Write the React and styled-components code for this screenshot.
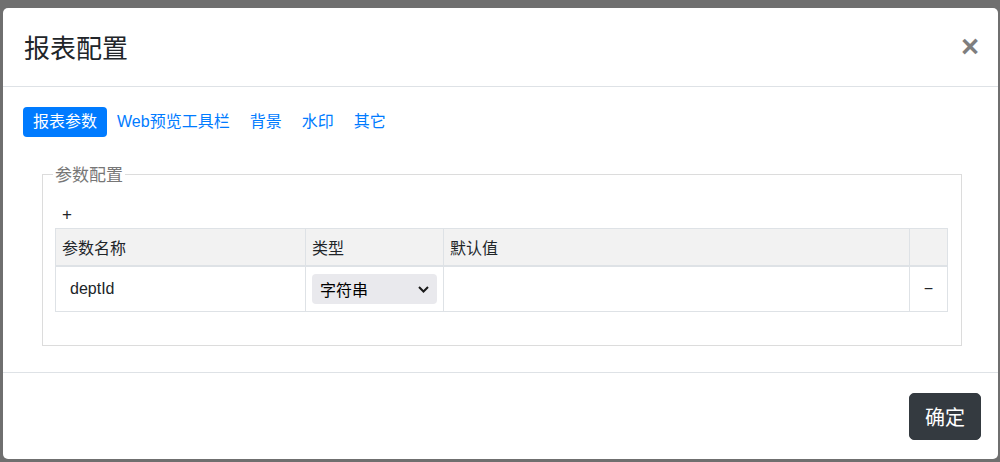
import React from "react";
import styled, { createGlobalStyle } from "styled-components";

const GlobalStyle = createGlobalStyle`
  html, body { margin: 0; padding: 0; }
  body {
    background: #6f6f6f;
    font-family: "Liberation Sans", "Noto Sans CJK SC", sans-serif;
    color: #212529;
  }
  * { box-sizing: border-box; }
`;

const Backdrop = styled.div`
  height: 462px;
  padding: 8px 2px 3px 3px;
  overflow: hidden;
`;

const Dialog = styled.div`
  width: 995px;
  background: #fff;
  border-radius: 5px;
  display: flex;
  flex-direction: column;
`;

const Header = styled.div`
  height: 79px;
  border-bottom: 1px solid #dee2e6;
  display: flex;
  align-items: center;
  justify-content: space-between;
  padding: 0 19px 0 21px;
`;

const Title = styled.h5`
  margin: 0;
  font-family: "Noto Sans CJK SC", sans-serif;
  font-size: 26px;
  font-weight: 400;
  line-height: 1.2;
  color: #212529;
`;

const CloseButton = styled.button`
  background: none;
  border: 0;
  padding: 0;
  margin: 0 0 2px 0;
  font-family: "Liberation Sans", sans-serif;
  font-size: 31px;
  font-weight: 700;
  line-height: 1;
  color: #000;
  opacity: 0.5;
  cursor: pointer;
`;

const Body = styled.div`
  padding: 20px 20px 26px 20px;
`;

const Nav = styled.div`
  display: flex;
`;

const NavLink = styled.a`
  display: block;
  padding: 3px 10px;
  font-family: "Liberation Sans", "Noto Sans CJK SC", sans-serif;
  font-size: 16px;
  line-height: 24px;
  border-radius: 4px;
  color: ${(p) => (p.$active ? "#fff" : "#007bff")};
  background: ${(p) => (p.$active ? "#007bff" : "transparent")};
  text-decoration: none;
  cursor: pointer;
`;

const Fieldset = styled.fieldset`
  margin: 24px 16px 0 19px;
  padding: 16px 13px 33px 12px;
  border: 1px solid #dcdcdc;
  min-width: 0;
`;

const Legend = styled.legend`
  padding: 0 2px;
  margin-left: -2px;
  font-family: "Noto Sans CJK SC", sans-serif;
  font-size: 17px;
  line-height: 26px;
  color: #777;
`;

const AddButton = styled.div`
  padding-left: 7px;
  margin-bottom: 1px;
  font-size: 17px;
  line-height: 24px;
  color: #212529;
  cursor: pointer;
`;

const Table = styled.table`
  width: 100%;
  table-layout: fixed;
  border-collapse: collapse;
  font-size: 16px;
  line-height: 24px;
`;

const Th = styled.th`
  background: #f2f2f2;
  border: 1px solid #dee2e6;
  border-bottom-width: 2px;
  padding: 6px;
  text-align: left;
  font-weight: 400;
  font-family: "Noto Sans CJK SC", sans-serif;
`;

const Td = styled.td`
  border: 1px solid #dee2e6;
  padding: 7px 6px;
  vertical-align: middle;
  text-align: ${(p) => p.$align || "left"};
`;

const NameText = styled.div`
  padding-left: 8px;
  font-family: "Liberation Sans", sans-serif;
`;

const SelectWrap = styled.div`
  position: relative;
  height: 30px;
`;

const Select = styled.select`
  appearance: none;
  width: 100%;
  height: 30px;
  border: 0;
  border-radius: 4px;
  background: #e9e9ed;
  padding: 0 24px 0 8px;
  font-family: "Noto Sans CJK SC", sans-serif;
  font-size: 16px;
  color: #000;
  outline: none;
`;

const Chevron = styled.svg`
  position: absolute;
  right: 8px;
  top: 12px;
  pointer-events: none;
`;

const RemoveButton = styled.span`
  font-family: "Liberation Sans", sans-serif;
  font-size: 16px;
  color: #212529;
  cursor: pointer;
`;

const Footer = styled.div`
  border-top: 1px solid #dee2e6;
  padding: 20px 17px 19px;
  display: flex;
  justify-content: flex-end;
`;

const ConfirmButton = styled.button`
  background: #343a40;
  border: 1px solid #343a40;
  color: #fff;
  padding: 8px 15px 7px;
  font-family: "Noto Sans CJK SC", sans-serif;
  font-size: 20px;
  line-height: 30px;
  border-radius: 5px;
  cursor: pointer;
`;

const tabs = ["报表参数", "Web预览工具栏", "背景", "水印", "其它"];

export default function App() {
  return (
    <>
      <GlobalStyle />
      <Backdrop>
        <Dialog>
          <Header>
            <Title>报表配置</Title>
            <CloseButton aria-label="Close">×</CloseButton>
          </Header>
          <Body>
            <Nav>
              {tabs.map((t, i) => (
                <NavLink key={t} $active={i === 0}>
                  {t}
                </NavLink>
              ))}
            </Nav>
            <Fieldset>
              <Legend>参数配置</Legend>
              <AddButton>+</AddButton>
              <Table>
                <colgroup>
                  <col style={{ width: 250 }} />
                  <col style={{ width: 138 }} />
                  <col />
                  <col style={{ width: 38 }} />
                </colgroup>
                <thead>
                  <tr>
                    <Th>参数名称</Th>
                    <Th>类型</Th>
                    <Th>默认值</Th>
                    <Th></Th>
                  </tr>
                </thead>
                <tbody>
                  <tr>
                    <Td>
                      <NameText>deptId</NameText>
                    </Td>
                    <Td>
                      <SelectWrap>
                        <Select defaultValue="string">
                          <option value="string">字符串</option>
                          <option value="number">数字</option>
                        </Select>
                        <Chevron width="11" height="7" viewBox="0 0 11 7">
                          <path d="M1 1 L5.5 5.5 L10 1" fill="none" stroke="#1a1a1a" strokeWidth="2" />
                        </Chevron>
                      </SelectWrap>
                    </Td>
                    <Td></Td>
                    <Td $align="center">
                      <RemoveButton>−</RemoveButton>
                    </Td>
                  </tr>
                </tbody>
              </Table>
            </Fieldset>
          </Body>
          <Footer>
            <ConfirmButton>确定</ConfirmButton>
          </Footer>
        </Dialog>
      </Backdrop>
    </>
  );
}
